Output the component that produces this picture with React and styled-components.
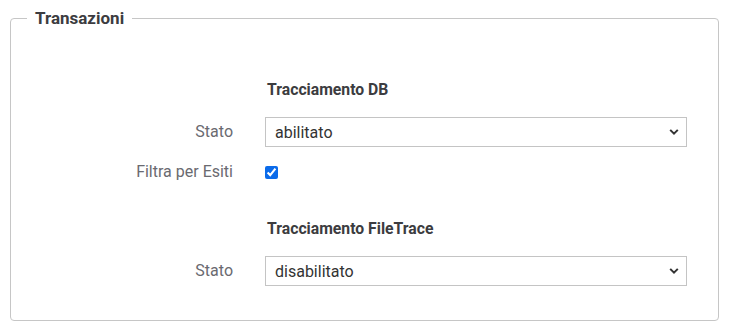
import styled, { createGlobalStyle } from "styled-components";

const GlobalStyle = createGlobalStyle`
  html, body {
    margin: 0;
    padding: 0;
    background: #ffffff;
  }
  body {
    font-family: Roboto, "Liberation Sans", Arial, sans-serif;
    color: #333;
  }
`;

const Page = styled.div`
  width: 736px;
  height: 329px;
  box-sizing: border-box;
  padding: 9px 17px 8px 10px;
`;

const Fieldset = styled.fieldset`
  margin: 0;
  min-width: 0;
  height: 100%;
  box-sizing: border-box;
  border: 1px solid #c6c6c6;
  border-radius: 4px;
  padding: 0 31px 0 16px;
`;

const Legend = styled.legend`
  padding: 0 8px;
  font-size: 17px;
  line-height: 18px;
  font-weight: 700;
  color: #3c3c40;
`;

const Section = styled.div`
  display: grid;
  grid-template-columns: 206px 1fr;
  column-gap: 32px;
  row-gap: 15px;
  align-items: center;
  margin-top: ${(p) => p.$top}px;
`;

const Title = styled.h3`
  grid-column: 2;
  margin: 0 0 2px 2px;
  font-size: 15.75px;
  line-height: 20px;
  font-weight: 700;
  color: #3c3c40;
`;

const Label = styled.label`
  text-align: right;
  font-size: 16px;
  line-height: 20px;
  color: #6a6a70;
`;

const SelectWrap = styled.div`
  position: relative;
  height: 30px;

  svg {
    position: absolute;
    right: 8px;
    top: 50%;
    transform: translateY(-50%);
    pointer-events: none;
  }
`;

const Select = styled.select`
  appearance: none;
  width: 100%;
  height: 30px;
  box-sizing: border-box;
  border: 1px solid #c4c4c4;
  border-radius: 0;
  background: #fff;
  padding: 0 28px 0 9px;
  font-family: Roboto, "Liberation Sans", Arial, sans-serif;
  font-size: 16px;
  color: #333;
  outline: none;
`;

const CheckCell = styled.div`
  display: flex;
  align-items: center;
  height: 20px;
`;

const Checkbox = styled.input`
  width: 13px;
  height: 13px;
  margin: 0;
  accent-color: #0b6bea;
`;

function Chevron() {
  return (
    <svg width="10" height="7" viewBox="0 0 10 7">
      <path d="M1.2 1.4 L5 5.2 L8.8 1.4" fill="none" stroke="#333" strokeWidth="2" />
    </svg>
  );
}

function SelectField({ label, value, options }) {
  return (
    <>
      <Label>{label}</Label>
      <SelectWrap>
        <Select defaultValue={value}>
          {options.map((o) => (
            <option key={o} value={o}>
              {o}
            </option>
          ))}
        </Select>
        <Chevron />
      </SelectWrap>
    </>
  );
}

const stati = ["abilitato", "disabilitato"];

export default function App() {
  return (
    <>
      <GlobalStyle />
      <Page>
        <Fieldset>
          <Legend>Transazioni</Legend>
          <Section $top={53}>
            <Title>Tracciamento DB</Title>
            <SelectField label="Stato" value="abilitato" options={stati} />
            <Label>Filtra per Esiti</Label>
            <CheckCell>
              <Checkbox type="checkbox" defaultChecked />
            </CheckCell>
          </Section>
          <Section $top={37}>
            <Title>Tracciamento FileTrace</Title>
            <SelectField label="Stato" value="disabilitato" options={stati} />
          </Section>
        </Fieldset>
      </Page>
    </>
  );
}
